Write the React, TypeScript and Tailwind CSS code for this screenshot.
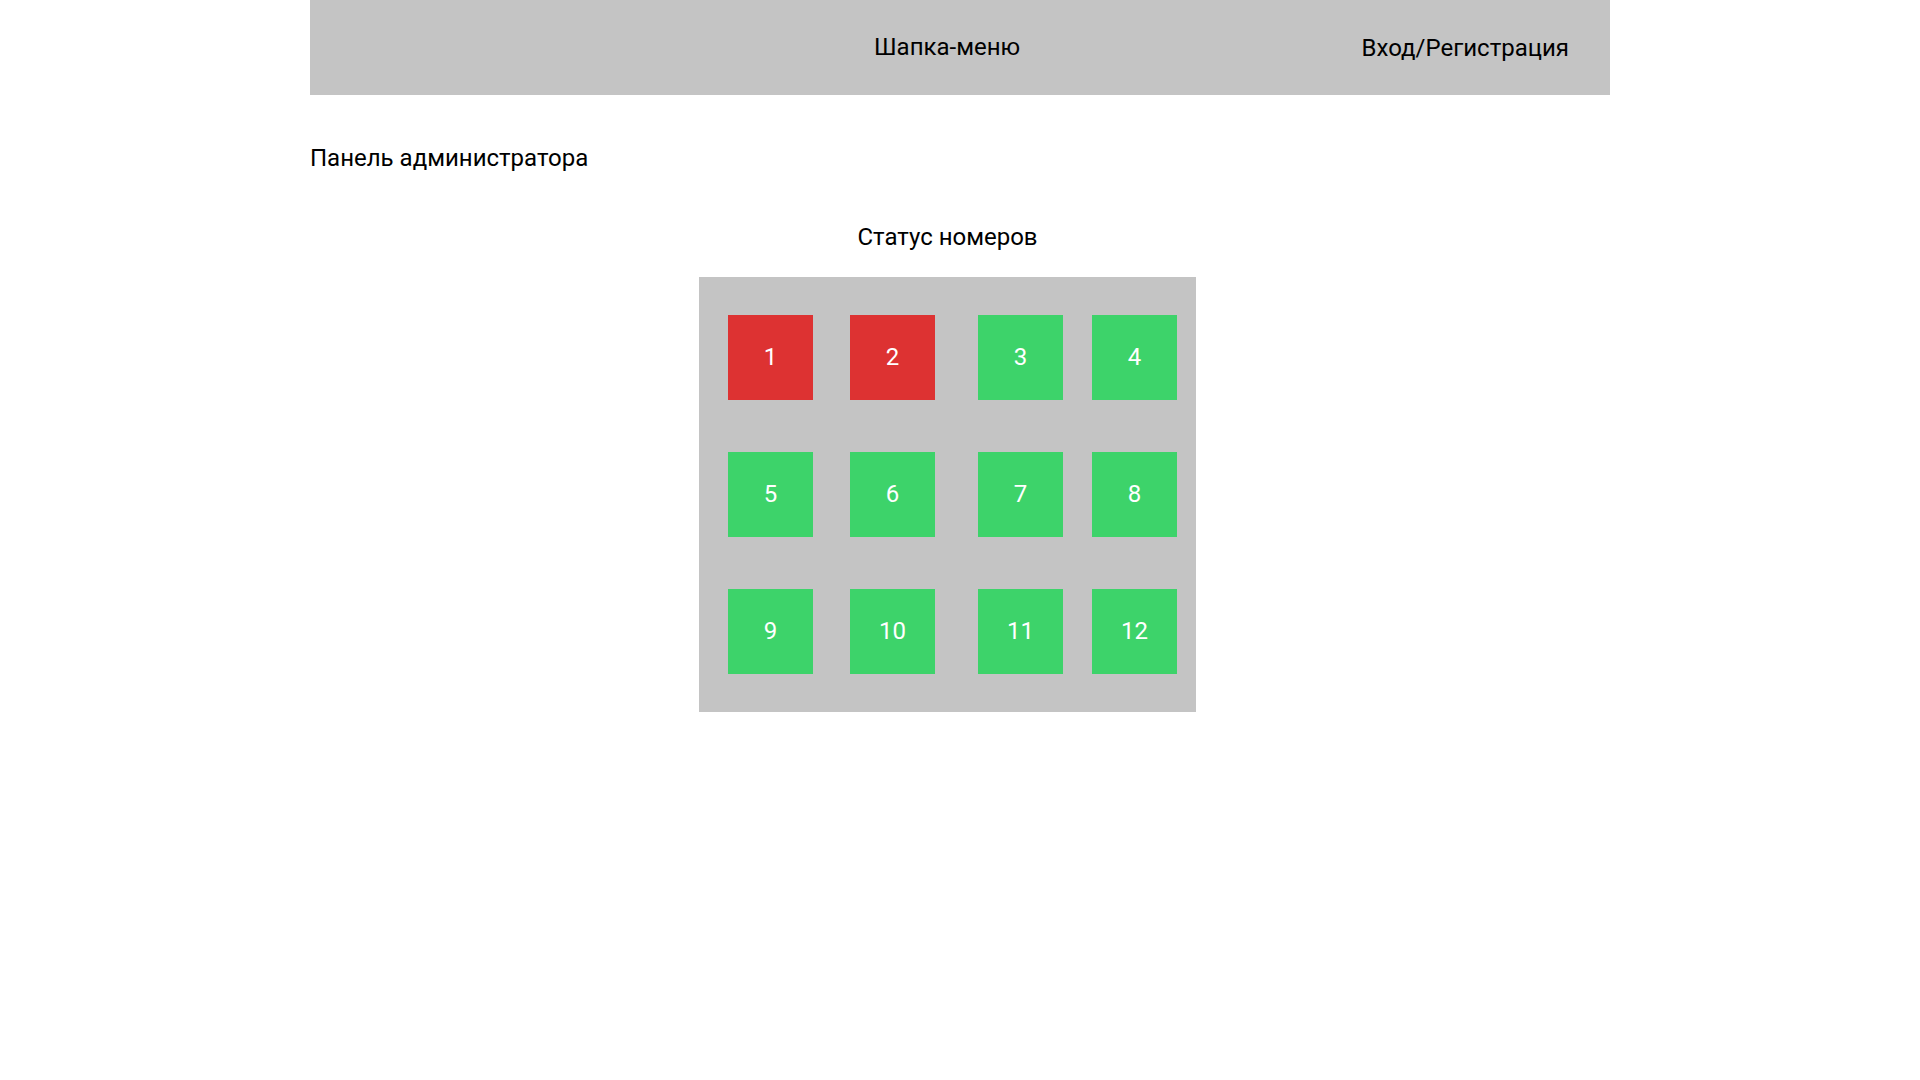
import React from 'react';

const rooms = [
  { n: 1, busy: true },
  { n: 2, busy: true },
  { n: 3, busy: false },
  { n: 4, busy: false },
  { n: 5, busy: false },
  { n: 6, busy: false },
  { n: 7, busy: false },
  { n: 8, busy: false },
  { n: 9, busy: false },
  { n: 10, busy: false },
  { n: 11, busy: false },
  { n: 12, busy: false },
];

export default function App() {
  return (
    <div className="min-h-screen w-full bg-white font-['Roboto',sans-serif] text-black">
      <div className="mx-auto w-[1300px]">
        {/* Header */}
        <header className="flex h-[95px] items-center bg-[#c4c4c4] text-[24px] leading-[28px]">
          <span className="pl-[564px] pb-[2px]">Шапка-меню</span>
          <span className="ml-auto pr-[41px]">Вход/Регистрация</span>
        </header>

        <h1 className="mt-[49px] text-[24px] leading-[28px] font-normal">Панель администратора</h1>

        <section className="ml-[389px] w-[497px]">
          <h2 className="mt-[51px] text-center text-[24px] leading-[28px] font-normal">Статус номеров</h2>

          <div className="mt-[26px] h-[435px] w-[497px] bg-[#c4c4c4] pl-[29px] pt-[38px]">
            <div className="grid grid-cols-[122px_128px_114px_85px] gap-y-[52px]">
              {rooms.map((r) => (
                <div
                  key={r.n}
                  className={`flex h-[85px] w-[85px] items-center justify-center pb-[2px] text-[24px] leading-[28px] text-white ${
                    r.busy ? 'bg-[#dd3232]' : 'bg-[#3dd36a]'
                  }`}
                >
                  {r.n}
                </div>
              ))}
            </div>
          </div>
        </section>
      </div>
    </div>
  );
}
